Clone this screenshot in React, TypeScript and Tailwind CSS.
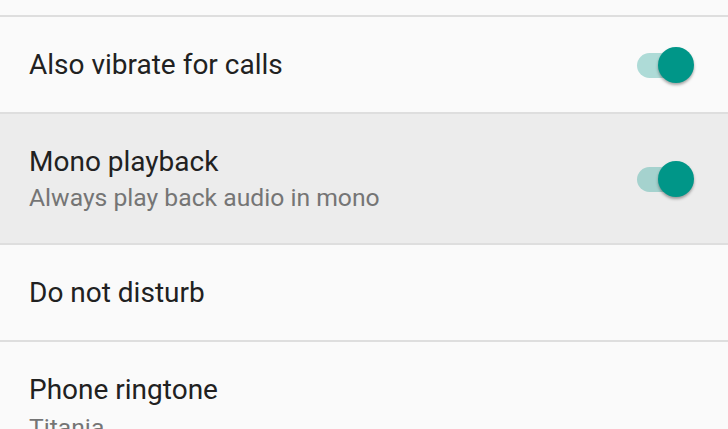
const font = { fontFamily: "Roboto, 'Noto Sans', sans-serif" };

function Toggle() {
  return (
    <div className="relative h-[36px] w-[57px] shrink-0">
      <div className="absolute left-0 top-[6px] h-[25px] w-[52px] rounded-full bg-[#009688]/30" />
      <div className="absolute right-0 top-0 h-[36px] w-[36px] rounded-full bg-[#009688] shadow-[0_2px_3px_rgba(0,0,0,0.35)]" />
    </div>
  );
}

function Row({
  title,
  sub,
  toggle,
  className,
}: {
  title: string;
  sub?: string;
  toggle?: boolean;
  className: string;
}) {
  return (
    <div className={`flex items-center justify-between border-b-2 border-[#dedede] pl-[29px] pr-[34px] ${className}`}>
      <div className="flex flex-col">
        <span className="text-[28px] leading-[34px] text-[#212121]">{title}</span>
        {sub && <span className="mt-[4px] text-[24.7px] leading-[30px] text-[#757575]">{sub}</span>}
      </div>
      {toggle && <Toggle />}
    </div>
  );
}

export default function App() {
  return (
    <div className="h-[429px] w-[728px] overflow-hidden bg-[#fafafa]" style={font}>
      <div className="h-[17px] border-b-2 border-[#dedede]" />
      <Row title="Also vibrate for calls" toggle className="h-[97px]" />
      <Row title="Mono playback" sub="Always play back audio in mono" toggle className="h-[131px] bg-[#ececec]" />
      <Row title="Do not disturb" className="h-[97px]" />
      <div className="flex flex-col pl-[29px] pt-[31px]">
        <span className="text-[28px] leading-[34px] text-[#212121]">Phone ringtone</span>
        <span className="mt-[6px] text-[24.7px] leading-[30px] text-[#757575]">Titania</span>
      </div>
    </div>
  );
}
